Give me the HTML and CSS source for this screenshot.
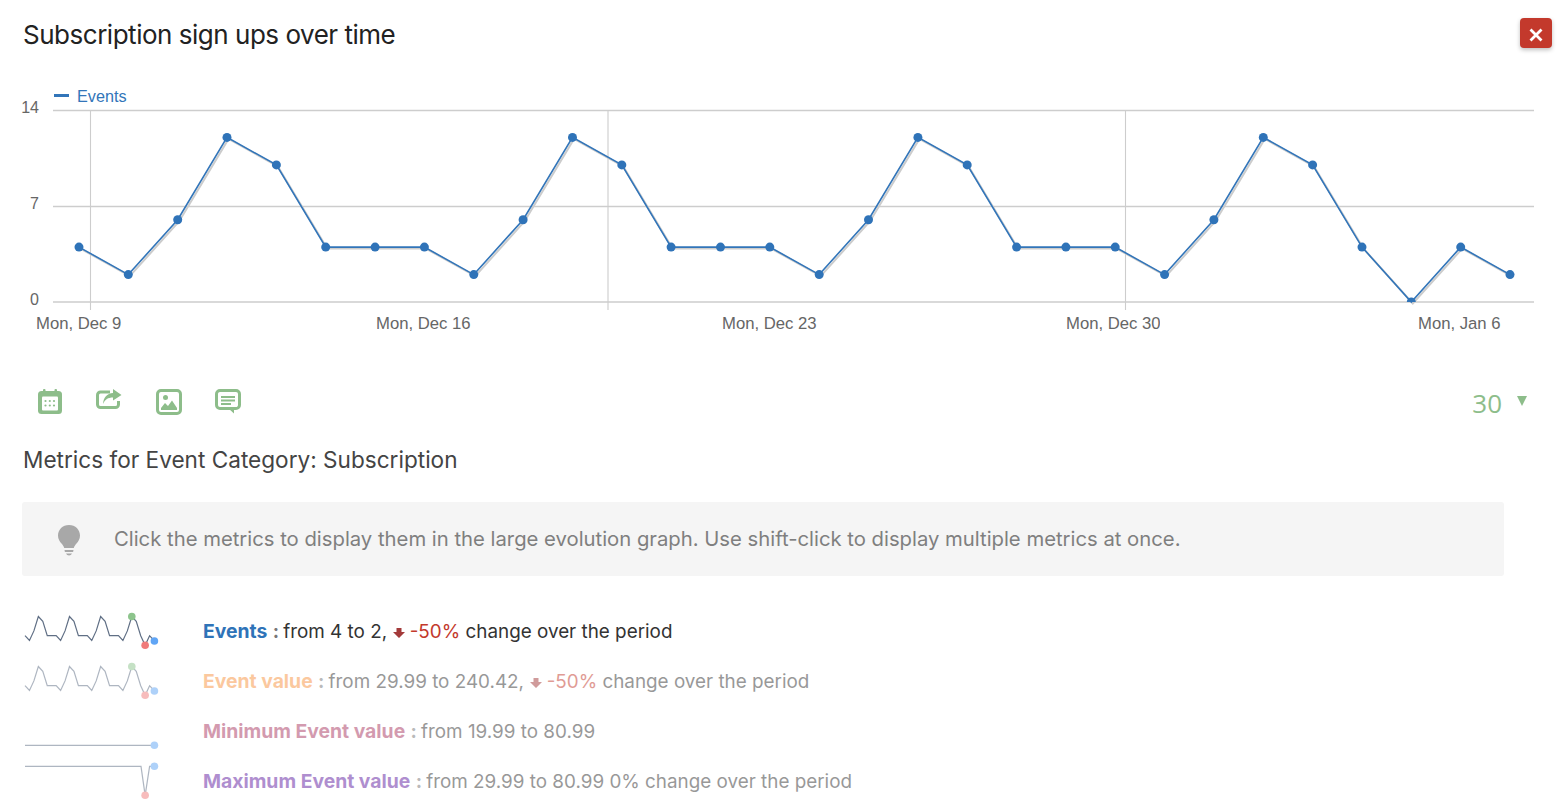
FILE: index.html
```html
<!DOCTYPE html>
<html lang="en">
<head>
    <meta charset="UTF-8">
    <title>Subscription sign ups over time</title>
    <link rel="stylesheet" href="styles.css">
</head>
<body>
    <div class="header">
        <h1>Subscription sign ups over time</h1>
        <button class="close-btn" aria-label="Close">
            <svg width="14" height="14" viewBox="0 0 14 14"><path d="M1.500 1.500l11 11M12.500 1.500l-11 11"/></svg>
        </button>
    </div>

    <svg class="chart" width="1564" height="260" viewBox="0 80 1564 260">
        <defs>
            <clipPath id="plot-clip"><rect x="53" y="100" width="1481" height="202"/></clipPath>
            <clipPath id="label-clip"><rect x="0" y="300" width="1160" height="40"/></clipPath>
        </defs>
        <rect class="legend-mark" x="54" y="94" width="15" height="3"/>
        <text class="legend-text" x="77" y="101.500">Events</text>

        <g class="grid">
            <path d="M53 110.500H1534M53 206.500H1534M53 302H1534"/>
            <path class="grid-v" d="M90.500 110V310M608 110V310M1125.500 110V310"/>
        </g>

        <text class="axis-y" x="39" y="113">14</text>
        <text class="axis-y" x="39" y="209">7</text>
        <text class="axis-y" x="39" y="305">0</text>

        <text class="axis-x" x="36" y="329">Mon, Dec 9</text>
        <text class="axis-x" x="376" y="329">Mon, Dec 16</text>
        <text class="axis-x" x="722" y="329">Mon, Dec 23</text>
        <text class="axis-x" x="1066" y="329" clip-path="url(#label-clip)">Mon, Dec 30</text>
        <text class="axis-x" x="1418" y="329">Mon, Jan 6</text>

        <polyline class="series-shadow" points="79,247.1 128.3,274.6 177.7,219.7 227,137.4 276.4,164.9 325.7,247.1 375.1,247.1 424.4,247.1 473.8,274.6 523.1,219.7 572.5,137.4 621.8,164.9 671.1,247.1 720.5,247.1 769.8,247.1 819.2,274.6 868.5,219.7 917.9,137.4 967.2,164.9 1016.6,247.1 1065.9,247.1 1115.2,247.1 1164.6,274.6 1213.9,219.7 1263.3,137.4 1312.6,164.9 1362,247.1 1411.3,302 1460.7,247.1 1510,274.6"/>
        <polyline class="series" points="79,247.1 128.3,274.6 177.7,219.7 227,137.4 276.4,164.9 325.7,247.1 375.1,247.1 424.4,247.1 473.8,274.6 523.1,219.7 572.5,137.4 621.8,164.9 671.1,247.1 720.5,247.1 769.8,247.1 819.2,274.6 868.5,219.7 917.9,137.4 967.2,164.9 1016.6,247.1 1065.9,247.1 1115.2,247.1 1164.6,274.6 1213.9,219.7 1263.3,137.4 1312.6,164.9 1362,247.1 1411.3,302 1460.7,247.1 1510,274.6"/>
        <g class="points" clip-path="url(#plot-clip)">
            <circle cx="79" cy="247.1" r="4.500"/><circle cx="128.3" cy="274.6" r="4.500"/><circle cx="177.7" cy="219.7" r="4.500"/>
            <circle cx="227" cy="137.4" r="4.500"/><circle cx="276.4" cy="164.9" r="4.500"/><circle cx="325.7" cy="247.1" r="4.500"/>
            <circle cx="375.1" cy="247.1" r="4.500"/><circle cx="424.4" cy="247.1" r="4.500"/><circle cx="473.8" cy="274.6" r="4.500"/>
            <circle cx="523.1" cy="219.7" r="4.500"/><circle cx="572.5" cy="137.4" r="4.500"/><circle cx="621.8" cy="164.9" r="4.500"/>
            <circle cx="671.1" cy="247.1" r="4.500"/><circle cx="720.5" cy="247.1" r="4.500"/><circle cx="769.8" cy="247.1" r="4.500"/>
            <circle cx="819.2" cy="274.6" r="4.500"/><circle cx="868.5" cy="219.7" r="4.500"/><circle cx="917.9" cy="137.4" r="4.500"/>
            <circle cx="967.2" cy="164.9" r="4.500"/><circle cx="1016.6" cy="247.1" r="4.500"/><circle cx="1065.9" cy="247.1" r="4.500"/>
            <circle cx="1115.2" cy="247.1" r="4.500"/><circle cx="1164.6" cy="274.6" r="4.500"/><circle cx="1213.9" cy="219.7" r="4.500"/>
            <circle cx="1263.3" cy="137.4" r="4.500"/><circle cx="1312.6" cy="164.9" r="4.500"/><circle cx="1362" cy="247.1" r="4.500"/>
            <circle cx="1411.3" cy="302" r="4.500"/><circle cx="1460.7" cy="247.1" r="4.500"/><circle cx="1510" cy="274.6" r="4.500"/>
        </g>
    </svg>

    <div class="toolbar">
        <div class="toolbar-icons">
            <svg class="icon" width="26" height="26" viewBox="0 0 26 26">
                <rect x="1" y="2" width="24" height="23" rx="3.500"/>
                <rect x="6" y="0" width="2.500" height="5" rx="1"/>
                <rect x="17.500" y="0" width="2.500" height="5" rx="1"/>
                <rect class="icon-cut" x="5" y="7.500" width="16" height="14" rx="1"/>
                <circle cx="8.500" cy="12" r="1.100"/><circle cx="12.800" cy="12" r="1.100"/><circle cx="17" cy="12" r="1.100"/>
                <circle cx="8.500" cy="16.500" r="1.100"/><circle cx="12.800" cy="16.500" r="1.100"/><circle cx="17" cy="16.500" r="1.100"/>
            </svg>
            <svg class="icon" width="26" height="26" viewBox="0 0 26 26">
                <path class="icon-open" d="M14 3H4.500a3 3 0 0 0-3 3v9.500a3 3 0 0 0 3 3h15a3 3 0 0 0 3-3V12"/>
                <path d="M17 0l8.500 6L17 11.500V8.500c-5 0-8 2-10 6.500 .5-6.500 4-10.500 10-11z"/>
            </svg>
            <svg class="icon" width="26" height="26" viewBox="0 0 26 26">
                <rect class="icon-line" x="1.500" y="1.500" width="23" height="23" rx="3.500"/>
                <circle cx="9.500" cy="8.500" r="2.500"/>
                <path d="M5 21v-2l4-5 3 3 4-5.500 5 7.500v2z"/>
            </svg>
            <svg class="icon" width="26" height="26" viewBox="0 0 26 26">
                <path class="icon-line" d="M5 1.500h16a3.500 3.500 0 0 1 3.500 3.500v11a3.500 3.500 0 0 1-3.500 3.500H5A3.500 3.500 0 0 1 1.500 16V5A3.500 3.500 0 0 1 5 1.500z"/>
                <path d="M14 20h5v4.500z"/>
                <path d="M6 7h14v2H6zM6 10.500h14v2H6zM6 14h10v2H6z"/>
            </svg>
        </div>
        <div class="period-select">
            <span class="period-value">30</span>
            <span class="period-arrow"></span>
        </div>
    </div>

    <h2>Metrics for Event Category: Subscription</h2>

    <div class="notice">
        <svg class="notice-icon" width="24" height="32" viewBox="0 0 24 32">
            <path d="M12 0C5.500 0 1 4.700 1 10.500c0 3.500 1.700 6 3.500 8 1.200 1.300 2.300 3 2.700 4.500h9.600c.4-1.500 1.500-3.200 2.700-4.500 1.800-2 3.500-4.500 3.500-8C23 4.700 18.500 0 12 0z"/>
            <path d="M7.500 25h9l-.4 2H7.900zM9 28.500h6c-.6 1.200-1.700 2-3 2s-2.400-.8-3-2z"/>
        </svg>
        <span class="notice-text">Click the metrics to display them in the large evolution graph. Use shift-click to display multiple metrics at once.</span>
    </div>

    <div class="metrics">
        <div class="metric">
            <svg class="spark" width="140" height="50" viewBox="0 0 140 50">
                <polyline points="3,29.7 7.45,34.5 11.9,24.9 16.35,10.5 20.8,15.3 25.25,29.7 29.7,29.7 34.15,29.7 38.6,34.5 43.05,24.9 47.5,10.5 51.95,15.3 56.4,29.7 60.85,29.7 65.3,29.7 69.75,34.5 74.2,24.9 78.65,10.5 83.1,15.3 87.55,29.7 92,29.7 96.45,29.7 100.9,34.5 105.35,24.9 109.8,10.5 114.25,15.3 118.7,29.7 123.15,39.3 127.6,29.7 132.05,34.5"/>
                <circle class="dot-max" cx="109.8" cy="10.5" r="3.800"/>
                <circle class="dot-min" cx="123.15" cy="39.3" r="3.800"/>
                <circle class="dot-last" cx="132.4" cy="35" r="3.800"/>
            </svg>
            <p><span class="metric-name name-events">Events</span> <b class="sep">:</b> from 4 to 2,
                <svg class="trend" width="12" height="10" viewBox="0 0 12 10"><path d="M3.500 0h5v4H12L6 10 0 4h3.500z"/></svg>
                <span class="down">-50%</span> change over the period</p>
        </div>
        <div class="metric metric-off">
            <svg class="spark" width="140" height="50" viewBox="0 0 140 50">
                <polyline points="3,29.7 7.45,34.5 11.9,24.9 16.35,10.5 20.8,15.3 25.25,29.7 29.7,29.7 34.15,29.7 38.6,34.5 43.05,24.9 47.5,10.5 51.95,15.3 56.4,29.7 60.85,29.7 65.3,29.7 69.75,34.5 74.2,24.9 78.65,10.5 83.1,15.3 87.55,29.7 92,29.7 96.45,29.7 100.9,34.5 105.35,24.9 109.8,10.5 114.25,15.3 118.7,29.7 123.15,39.3 127.6,29.7 132.05,34.5"/>
                <circle class="dot-max" cx="109.8" cy="10.5" r="3.800"/>
                <circle class="dot-min" cx="123.15" cy="39.3" r="3.800"/>
                <circle class="dot-last" cx="132.4" cy="35" r="3.800"/>
            </svg>
            <p><span class="metric-name name-value">Event value</span> <b class="sep">:</b> from 29.99 to 240.42,
                <svg class="trend" width="12" height="10" viewBox="0 0 12 10"><path d="M3.500 0h5v4H12L6 10 0 4h3.500z"/></svg>
                <span class="down">-50%</span> change over the period</p>
        </div>
        <div class="metric metric-off">
            <svg class="spark" width="140" height="50" viewBox="0 0 140 50">
                <polyline points="3,39.3 132,39.3"/>
                <circle class="dot-last" cx="132.4" cy="39.3" r="3.800"/>
            </svg>
            <p><span class="metric-name name-min">Minimum Event value</span> <b class="sep">:</b> from 19.99 to 80.99</p>
        </div>
        <div class="metric metric-off">
            <svg class="spark" width="140" height="50" viewBox="0 0 140 50">
                <polyline points="3,10.3 119,10.3 123.15,39.3 127.6,10.3 132,10.3"/>
                <circle class="dot-min" cx="123.15" cy="39.3" r="3.800"/>
                <circle class="dot-last" cx="132.4" cy="10.3" r="3.800"/>
            </svg>
            <p><span class="metric-name name-maxv">Maximum Event value</span> <b class="sep">:</b> from 29.99 to 80.99 0% change over the period</p>
        </div>
    </div>
</body>
</html>
```

FILE: styles.css
```css
body {
    font-family: Inter, "Noto Sans", sans-serif;
    margin: 0;
    padding: 0;
    color: #333;
    background-color: #fff;
    overflow: hidden;
}
.header {
    display: flex;
    justify-content: space-between;
    align-items: flex-start;
    height: 80px;
    padding: 18px 12px 0 23px;
    box-sizing: border-box;
}
h1 {
    margin: 0;
    font-size: 26px;
    font-weight: 400;
    line-height: 34px;
    letter-spacing: -0.48px;
    color: #222;
}
.close-btn {
    display: flex;
    align-items: center;
    justify-content: center;
    width: 32px;
    height: 30px;
    padding: 4px 0 0;
    border: 0;
    border-radius: 4px;
    background-color: #c3392c;
    box-shadow: 0 2px 4px rgba(0, 0, 0, 0.25);
}
.close-btn path {
    fill: none;
    stroke: #fff;
    stroke-width: 2.800;
}
.chart {
    display: block;
}
.chart text {
    font-family: "Liberation Sans", Arial, sans-serif;
    font-size: 16.700px;
    fill: #666;
}
.chart .legend-text {
    font-size: 16.200px;
    fill: #3275b9;
}
.chart .axis-y {
    font-size: 16px;
    text-anchor: end;
}
.legend-mark {
    fill: #3275b9;
}
.grid path {
    fill: none;
    stroke: #cdcdcd;
    stroke-width: 1.500;
}
.grid .grid-v {
    stroke-width: 1.100;
}
.series {
    fill: none;
    stroke: #3275b9;
    stroke-width: 1.600;
}
.series-shadow {
    fill: none;
    stroke: #ccc;
    stroke-width: 2;
    transform: translate(1.500px, 1.500px);
}
.points circle {
    fill: #2f73b8;
}
.toolbar {
    display: flex;
    justify-content: space-between;
    align-items: flex-start;
    height: 55px;
    padding: 49px 37px 0 36.500px;
}
.toolbar-icons {
    display: flex;
    gap: 33.500px;
}
.icon {
    fill: #8dbd8a;
}
.icon .icon-cut {
    fill: #fff;
}
.icon .icon-line {
    fill: #fff;
    stroke: #8dbd8a;
    stroke-width: 3;
}
.icon .icon-open {
    fill: none;
    stroke: #8dbd8a;
    stroke-width: 3;
}
.period-select {
    display: flex;
    align-items: flex-start;
    gap: 15px;
}
.period-value {
    font-family: "Open Sans", sans-serif;
    font-size: 26px;
    line-height: 30px;
    margin-top: -1px;
    color: #8dbd8a;
}
.period-arrow {
    width: 0;
    height: 0;
    margin-top: 7px;
    border-left: 5px solid transparent;
    border-right: 5px solid transparent;
    border-top: 10px solid #8dbd8a;
}
h2 {
    margin: 0;
    padding-left: 23px;
    font-size: 22.600px;
    font-weight: 400;
    line-height: 32px;
    color: #444;
}
.notice {
    display: flex;
    align-items: center;
    gap: 33px;
    width: 1482px;
    height: 74px;
    margin: 26px 0 30px 22px;
    padding-left: 35px;
    box-sizing: border-box;
    border-radius: 3px;
    background-color: #f5f5f5;
    font-size: 20.270px;
    color: #7f7f7f;
}
.notice-icon {
    flex-shrink: 0;
    margin-top: 4px;
    fill: #a8a8a8;
}
.notice-text {
    margin-bottom: 2px;
}
.metrics {
    padding-left: 22px;
}
.metric {
    display: flex;
    align-items: center;
    gap: 41px;
    height: 50px;
}
.metric-off {
    opacity: 0.5;
}
.metric p {
    margin: 0;
    font-size: 18.850px;
}
.spark polyline {
    fill: none;
    stroke: #606f85;
    stroke-width: 1.200;
}
.dot-max {
    fill: #8dc48c;
}
.dot-min {
    fill: #f07b7b;
}
.dot-last {
    fill: #60a5f5;
}
.metric-name {
    font-size: 19.350px;
    font-weight: 700;
}
.sep {
    font-weight: 700;
    margin-right: -1px;
    color: #777;
}
.name-events {
    color: #2f73b8;
}
.name-value {
    color: #f9933f;
}
.name-min {
    color: #a93761;
}
.name-maxv {
    color: #6120a1;
}
.down {
    color: #c3392c;
}
.trend {
    fill: #a33a3a;
    margin: 0 -1px 0 1px;
}
```
